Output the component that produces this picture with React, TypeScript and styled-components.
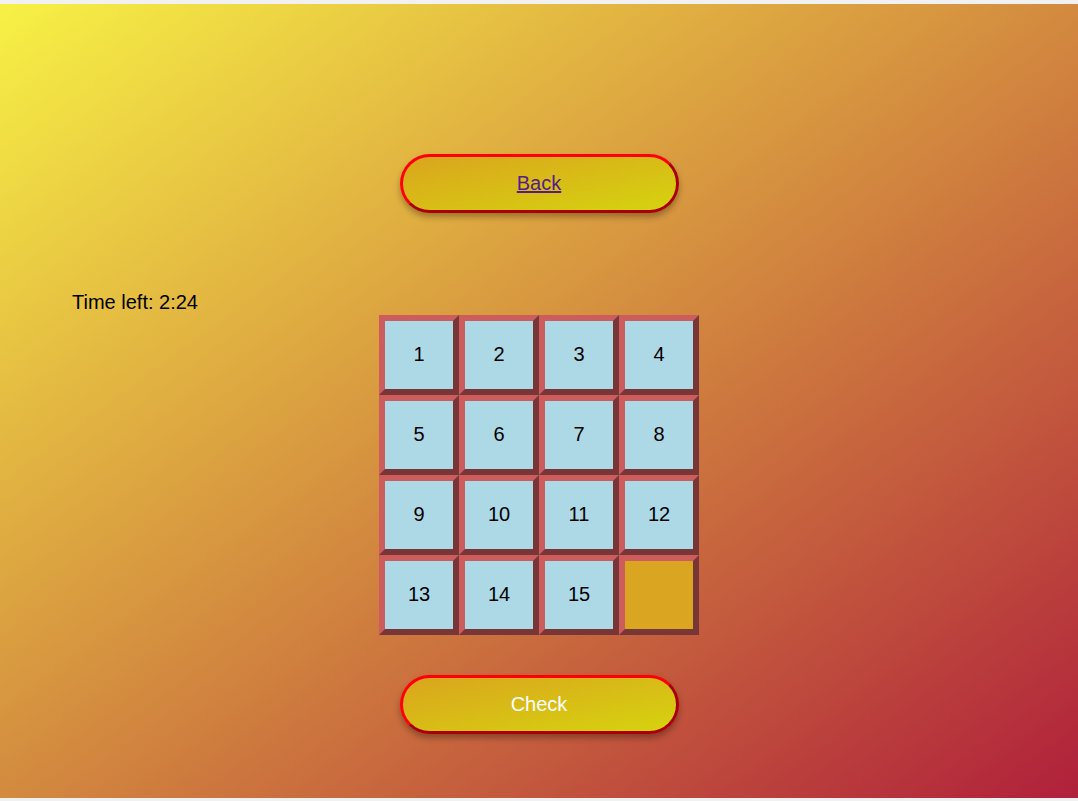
import React from "react";
import styled, { createGlobalStyle } from "styled-components";

const GlobalStyle = createGlobalStyle`
  html, body {
    margin: 0;
    padding: 0;
    background: #f1f1f1;
  }
  body {
    font-family: "Liberation Sans", Arial, sans-serif;
  }
`;

const tiles: (number | null)[] = [1, 2, 3, 4, 5, 6, 7, 8, 9, 10, 11, 12, 13, 14, 15, null];

export default function App() {
  return (
    <>
      <GlobalStyle />
      <PageStyled>
        <PillButton as="div">
          <BackLink href="#">Back</BackLink>
        </PillButton>
        <TimerStyled>Time left: 2:24</TimerStyled>
        <BoardStyled>
          {tiles.map((n, i) => (
            <TileStyled key={i} $empty={n === null}>
              {n}
            </TileStyled>
          ))}
        </BoardStyled>
        <PillButton $light>Check</PillButton>
      </PageStyled>
    </>
  );
}

const PageStyled = styled.div`
  margin-top: 4px;
  height: 794px;
  box-sizing: border-box;
  padding-top: 150px;
  display: flex;
  flex-direction: column;
  align-items: center;
  background: linear-gradient(to bottom right, #f7f145 0%, #d38a3f 50%, #b0203b 100%);
`;

const PillButton = styled.button<{ $light?: boolean }>`
  width: 279px;
  height: 59px;
  box-sizing: border-box;
  border: 3px outset #ff0000;
  border-radius: 30px;
  background: linear-gradient(to bottom right, #daa51e, #d6d30f);
  box-shadow: 0 4px 6px rgba(0, 0, 0, 0.3);
  display: flex;
  align-items: center;
  justify-content: center;
  font-family: "Liberation Sans", Arial, sans-serif;
  font-size: 20px;
  color: ${(p) => (p.$light ? "#ffffff" : "#000000")};
  margin-top: ${(p) => (p.$light ? "40px" : "0")};
  padding: 0 0 1px;
  cursor: pointer;
`;

const BackLink = styled.a`
  color: #551a8b;
  text-decoration: underline;
  font-size: 20px;
`;

const TimerStyled = styled.div`
  align-self: flex-start;
  margin: 78px 0 0 72px;
  font-size: 20px;
  line-height: 23px;
  color: #000000;
`;

const BoardStyled = styled.div`
  margin-top: 1px;
  display: grid;
  grid-template-columns: repeat(4, 80px);
  grid-template-rows: repeat(4, 80px);
`;

const TileStyled = styled.div<{ $empty?: boolean }>`
  box-sizing: border-box;
  border: 6px outset #cd5c5c;
  background: ${(p) => (p.$empty ? "#daa520" : "#add8e6")};
  display: flex;
  align-items: center;
  justify-content: center;
  padding-bottom: 2px;
  font-size: 20px;
  color: #000000;
`;
